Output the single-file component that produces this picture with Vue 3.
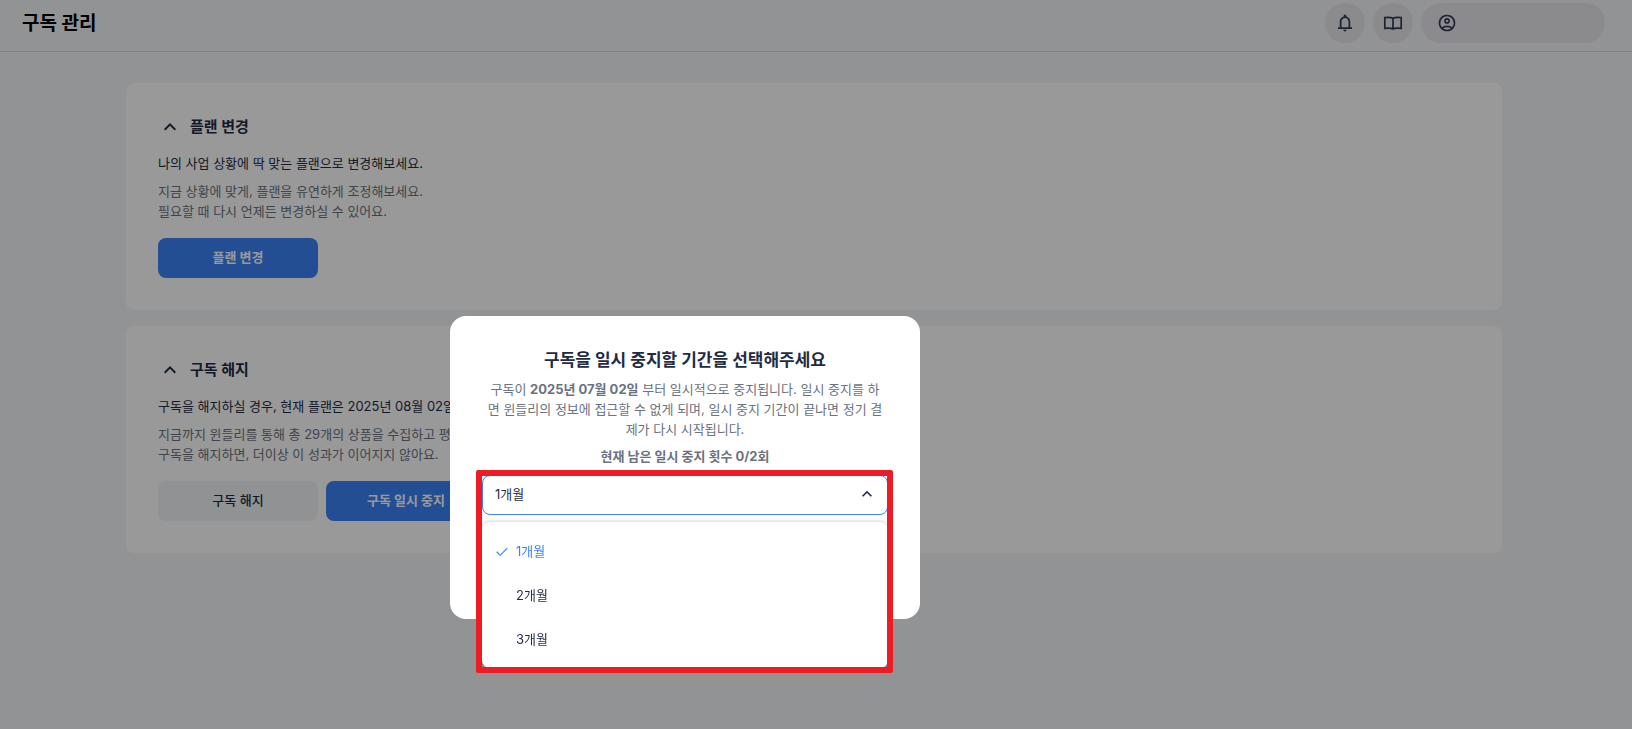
<script setup>
import { ref } from "vue";

const months = [1, 2, 3];
const selected = ref(1);
const menuOpen = ref(true);

const pick = (month) => {
  selected.value = month;
};
</script>

<template>
  <div class="page">
    <header class="topbar">
      <h1>구독 관리</h1>
      <div class="actions">
        <button class="icon-btn" type="button" aria-label="알림">
          <svg viewBox="0 0 24 24">
            <path d="M3.600 19.200v-2.100h2.100v-7q0-2.200 1.300-3.850T10.400 4.100v-.6q0-.67.460-1.130T12 1.900t1.140.470.460 1.130v.6q2.100.5 3.400 2.150T18.300 10.100v7h2.100v2.100zm8.400 3q-.83 0-1.410-.590T10 20.200h4q0 .83-.590 1.410T12 22.200m-4.200-5.100h8.400v-7q0-1.730-1.230-2.970T12 5.900 9.030 7.130 7.800 10.100z" />
          </svg>
        </button>
        <button class="icon-btn" type="button" aria-label="가이드">
          <svg class="line" viewBox="0 0 20 20">
            <path d="M10 5.300C8 4.300 5 4.200 1.800 4.600v10.800c3-.4 6.200-.3 8.200.5 2-.8 5.200-.9 8.200-.5V4.600C15 4.200 12 4.300 10 5.300v10.600" />
          </svg>
        </button>
        <button class="account" type="button" aria-label="내 계정">
          <svg viewBox="0 0 24 24">
            <path d="M5.850 17.100q1.275-.975 2.850-1.538T12 15t3.300.562 2.850 1.538q.875-1.025 1.363-2.325T20 12q0-3.325-2.337-5.663T12 4 6.337 6.337 4 12q0 1.475.488 2.775T5.850 17.100M12 13q-1.475 0-2.488-1.012T8.500 9.500t1.012-2.488T12 6t2.488 1.012T15.500 9.500t-1.012 2.488T12 13m0 9q-2.075 0-3.900-.788t-3.175-2.137-2.137-3.175T2 12t.788-3.900 2.137-3.175T8.100 2.788 12 2t3.900.788 3.175 2.137T21.212 8.100 22 12t-.788 3.900-2.137 3.175-3.175 2.137T12 22m0-2q1.325 0 2.500-.387t2.150-1.113q-.975-.725-2.150-1.112T12 17t-2.500.388T7.350 18.500q.975.725 2.150 1.113T12 20m0-9q.65 0 1.075-.425T13.500 9.500t-.425-1.075T12 8t-1.075.425T10.500 9.500t.425 1.075T12 11" />
          </svg>
        </button>
      </div>
    </header>

    <main class="content">
      <section class="card">
        <h2>
          <svg viewBox="0 0 24 24"><path d="M12 10.800l-4.600 4.600L6 14l6-6 6 6-1.400 1.400z" /></svg>
          플랜 변경
        </h2>
        <p class="lead">나의 사업 상황에 딱 맞는 플랜으로 변경해보세요.</p>
        <p class="desc">지금 상황에 맞게, 플랜을 유연하게 조정해보세요.<br />필요할 때 다시 언제든 변경하실 수 있어요.</p>
        <div class="buttons">
          <button class="btn primary" type="button">플랜 변경</button>
        </div>
      </section>

      <section class="card">
        <h2>
          <svg viewBox="0 0 24 24"><path d="M12 10.800l-4.600 4.600L6 14l6-6 6 6-1.400 1.400z" /></svg>
          구독 해지
        </h2>
        <p class="lead">구독을 해지하실 경우, 현재 플랜은 2025년 08월 02일</p>
        <p class="desc">지금까지 윈들리를 통해 총 29개의 상품을 수집하고 평<br />구독을 해지하면, 더이상 이 성과가 이어지지 않아요.</p>
        <div class="buttons">
          <button class="btn" type="button">구독 해지</button>
          <button class="btn primary" type="button">구독 일시 중지</button>
        </div>
      </section>
    </main>

    <div class="overlay">
      <div class="modal" role="dialog" aria-modal="true" aria-labelledby="pause-title">
        <h2 id="pause-title">구독을 일시 중지할 기간을 선택해주세요</h2>
        <p class="modal-text">
          구독이 <strong>2025년 07월 02일</strong> 부터 일시적으로 중지됩니다. 일시 중지를 하면 윈들리의 정보에 접근할 수 없게 되며, 일시 중지 기간이 끝나면 정기 결제가 다시 시작됩니다.
        </p>
        <label class="remaining" for="pause-period">현재 남은 일시 중지 횟수 0/2회</label>
        <div class="period">
          <select id="pause-period" v-model="selected">
            <option v-for="month in months" :key="month" :value="month">{{ month }}개월</option>
          </select>
          <svg class="caret" viewBox="0 0 24 24"><path d="M12 10.800l-4.600 4.600L6 14l6-6 6 6-1.400 1.400z" /></svg>
          <ul v-if="menuOpen" class="menu">
            <li v-for="month in months" :key="month">
              <button type="button" :class="{ active: month === selected }" @click="pick(month)">
                <svg viewBox="0 0 24 24"><path d="M9.300 19.600l-5.900-5.900 1.250-1.250L9.300 17.100l10-10 1.250 1.250z" /></svg>
                {{ month }}개월
              </button>
            </li>
          </ul>
          <div class="highlight"></div>
        </div>
      </div>
    </div>
  </div>
</template>

<style>
body {
  background: #f3f5f7;
}
</style>

<style scoped>
.page {
  min-height: 100vh;
  font-family: Inter, "Noto Sans CJK KR", sans-serif;
  font-size: 13px;
  line-height: 20px;
  color: #1f2c42;
}

h1,
h2,
p,
ul {
  margin: 0;
  padding: 0;
}

button,
select {
  font: inherit;
  color: inherit;
  border: none;
  cursor: pointer;
}

svg {
  flex: none;
  fill: currentColor;
}

.topbar {
  display: flex;
  align-items: center;
  justify-content: space-between;
  padding: 3px 27px 8px 22px;
  border-bottom: 1px solid #d5d7da;
}

.topbar h1 {
  padding-top: 2px;
  font-size: 19px;
  font-weight: 700;
  color: #000;
}

.actions {
  display: flex;
  gap: 8px;
}

.actions svg {
  width: 20px;
  height: 20px;
}

.actions .line {
  fill: none;
  stroke: currentColor;
  stroke-width: 1.7;
}

.icon-btn,
.account {
  display: flex;
  align-items: center;
  height: 40px;
  border-radius: 20px;
  background: #e8e8eb;
  color: #2d3c56;
}

.icon-btn {
  justify-content: center;
  width: 40px;
  padding: 0;
}

.account {
  width: 184px;
  padding: 0 16px;
}

.content {
  display: flex;
  flex-direction: column;
  gap: 16px;
  padding: 31px 130px 31px 126px;
}

.card {
  padding: 32px;
  border-radius: 8px;
  background: #fff;
}

.card h2 {
  display: flex;
  align-items: center;
  gap: 8px;
  margin-bottom: 14px;
  font-size: 15px;
  font-weight: 700;
  line-height: 24px;
}

.card h2 svg {
  width: 24px;
  height: 24px;
}

.desc {
  margin-top: 8px;
  color: #6b7280;
}

.buttons {
  display: flex;
  gap: 8px;
  margin-top: 17px;
}

.btn {
  width: 160px;
  height: 40px;
  padding: 0 0 2px;
  border-radius: 8px;
  background: #f1f3f5;
  font-weight: 500;
}

.btn.primary {
  background: #3b82f6;
  color: #fff;
  font-weight: 700;
}

.overlay {
  position: fixed;
  inset: 0;
  display: flex;
  align-items: center;
  justify-content: center;
  box-sizing: border-box;
  padding: 206px 262px 0 0;
  background: rgba(0, 0, 0, 0.4);
}

.modal {
  box-sizing: border-box;
  width: 470px;
  padding: 32px 32px 104px;
  border-radius: 16px;
  background: #fff;
  text-align: center;
}

.modal h2 {
  font-size: 17px;
  font-weight: 700;
  line-height: 24px;
}

.modal-text {
  margin-top: 7px;
  padding: 0 5px;
  color: #6b7280;
  word-break: break-all;
}

.remaining {
  display: block;
  margin: 7px 0 9px;
  font-weight: 700;
  color: #6b7280;
}

.period {
  position: relative;
}

.period select {
  display: block;
  width: 100%;
  height: 40px;
  padding: 0 12px 2px;
  border: 1px solid #3b82f6;
  border-radius: 8px;
  background: #fff;
  appearance: none;
  outline: none;
}

.caret {
  position: absolute;
  top: 9px;
  right: 11px;
  width: 20px;
  height: 20px;
  pointer-events: none;
}

.menu {
  position: absolute;
  top: 47px;
  left: 0;
  right: 0;
  padding: 7px 0;
  border-radius: 8px;
  background: #fff;
  box-shadow: 0 0 4px rgba(0, 0, 0, 0.25);
  list-style: none;
}

.menu button {
  display: flex;
  align-items: center;
  gap: 6px;
  width: 100%;
  height: 44px;
  padding: 0 12px;
  background: none;
}

.menu svg {
  width: 16px;
  height: 16px;
  visibility: hidden;
}

.menu .active {
  color: #3b82f6;
}

.menu .active svg {
  visibility: visible;
}

.highlight {
  position: absolute;
  inset: -5px -5px -158px -6px;
  border: 6px solid #ed1c24;
  border-radius: 2px;
  pointer-events: none;
}
</style>
